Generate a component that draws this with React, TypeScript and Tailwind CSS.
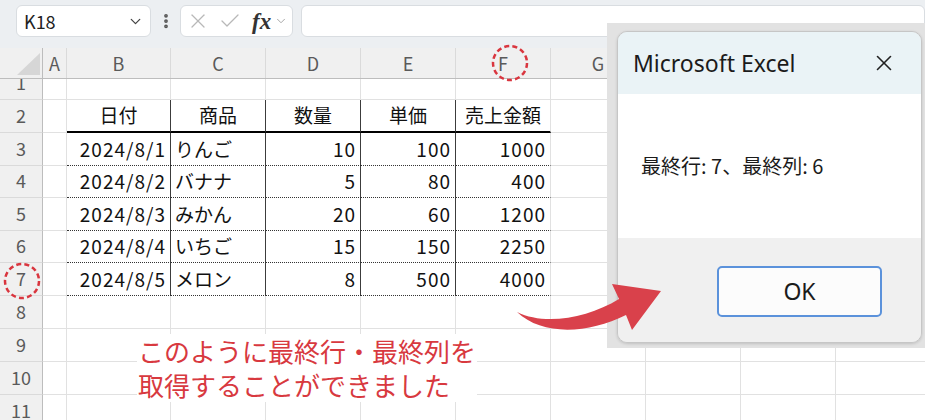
import { ChevronDown, EllipsisVertical, X, Check } from "lucide-react";

const cols = [
  { l: "A", w: "w-[24px]" },
  { l: "B", w: "w-[104px]" },
  { l: "C", w: "w-[95px]" },
  { l: "D", w: "w-[95px]" },
  { l: "E", w: "w-[95px]" },
  { l: "F", w: "w-[95px]" },
  { l: "G", w: "w-[95px]" },
  { l: "H", w: "w-[95px]" },
  { l: "I", w: "w-[95px]" },
  { l: "J", w: "w-[95px]" },
];

const rowHeights: Record<number, string> = {
  1: "h-[21px]",
  2: "h-[33px]",
  3: "h-[33px]",
  4: "h-[32px]",
  5: "h-[33px]",
  6: "h-[32px]",
  7: "h-[33px]",
  8: "h-[33px]",
  9: "h-[33px]",
  10: "h-[33px]",
  11: "h-[33px]",
};

const table: Record<number, string[]> = {
  2: ["日付", "商品", "数量", "単価", "売上金額"],
  3: ["2024/8/1", "りんご", "10", "100", "1000"],
  4: ["2024/8/2", "バナナ", "5", "80", "400"],
  5: ["2024/8/3", "みかん", "20", "60", "1200"],
  6: ["2024/8/4", "いちご", "15", "150", "2250"],
  7: ["2024/8/5", "メロン", "8", "500", "4000"],
};

const Cell = ({ ci, row }: { ci: number; row: number }) => {
  const col = cols[ci];
  const inTable = row >= 2 && row <= 7 && ci >= 1 && ci <= 5;
  if (!inTable) {
    return <div className={`${col.w} shrink-0 h-full border-r border-b border-[#e1e1e1]`} />;
  }
  const text = table[row][ci - 1];
  const right = ci < 5 ? "border-r border-r-[#3c3c3c]" : "border-r border-r-[#e1e1e1]";
  const bottom =
    row === 2
      ? "border-b-2 border-b-black"
      : "border-b border-b-[#333] [border-bottom-style:dotted]";
  let align = "justify-end pr-[4px] tracking-[1px]";
  if (row === 2) align = "justify-center";
  else if (ci === 2) align = "justify-start pl-[4px]";
  return (
    <div className={`${col.w} shrink-0 h-full flex items-center ${right} ${bottom} ${align} text-[19px] text-[#111]`}>
      {text}
    </div>
  );
};

export default function App() {
  const rows = [1, 2, 3, 4, 5, 6, 7, 8, 9, 10, 11];
  return (
    <div
      className="relative w-[925px] h-[420px] overflow-hidden bg-white"
      style={{ fontFamily: '"Noto Sans CJK JP", "Noto Sans", sans-serif' }}
    >
      {/* formula bar */}
      <div className="h-[48px] bg-[#eceff2] flex items-start pt-[5px] pl-[16px]">
        <div className="w-[135px] h-[32px] bg-white border border-[#d9dde1] rounded-[6px] flex items-center justify-between pl-[7px] pr-[6px]">
          <span className="text-[18px] text-[#222]">K18</span>
          <ChevronDown size={17} strokeWidth={1.8} className="text-[#444]" />
        </div>
        <div className="w-[29px] h-[32px] flex items-center justify-center">
          <EllipsisVertical size={18} strokeWidth={3} className="text-[#555]" />
        </div>
        <div className="w-[113px] h-[32px] bg-white border border-[#d9dde1] rounded-[6px] flex items-center pl-[5px]">
          <X size={24} strokeWidth={1.3} className="text-[#b8b8b8]" />
          <Check size={24} strokeWidth={1.3} className="ml-[8px] text-[#b8b8b8]" />
          <span
            className="ml-[10px] text-[23px] italic font-bold text-[#333] leading-none"
            style={{ fontFamily: '"Liberation Serif", serif' }}
          >
            fx
          </span>
          <ChevronDown size={14} strokeWidth={1.5} className="ml-[3px] text-[#9a9a9a]" />
        </div>
        <div className="ml-[8px] flex-1 h-[32px] bg-white border border-[#d9dde1] rounded-[6px]" />
      </div>

      {/* column headers */}
      <div className="flex h-[31px] bg-[#f0f0f0] border-b border-[#bdbdbd]">
        <div className="w-[43px] shrink-0 h-full border-r border-[#bdbdbd] relative">
          <svg className="absolute left-0 top-0" width="43" height="31">
            <polygon points="17,27 40,27 40,5" fill="#d6d6d6" />
          </svg>
        </div>
        {cols.map((c) => (
          <div
            key={c.l}
            className={`${c.w} shrink-0 h-full flex items-center justify-center border-r border-[#dadada] text-[18px] text-[#5a5a5a]`}
          >
            {c.l}
          </div>
        ))}
      </div>

      {/* rows */}
      {rows.map((r) => (
        <div key={r} className={`flex ${rowHeights[r]}`}>
          <div className="w-[43px] shrink-0 h-full bg-[#f0f0f0] border-r border-b border-r-[#bdbdbd] border-b-[#dadada] overflow-hidden flex items-end justify-center">
            <div className="h-[33px] shrink-0 flex items-center justify-center text-[18px] text-[#5a5a5a]">
              {r}
            </div>
          </div>
          {cols.map((c, ci) => (
            <Cell key={c.l} ci={ci} row={r} />
          ))}
        </div>
      ))}

      {/* annotation */}
      <div className="absolute left-[137px] top-[334px] bg-white px-[1px] text-[26px] leading-[34px] text-[#d8393f]">
        <div>このように最終行・最終列を</div>
        <div>取得することができました</div>
      </div>

      {/* message box screenshot */}
      <div className="absolute left-[607px] top-[23px] w-[318px] h-[325px] bg-[#e2e2e2] pl-[10px] pt-[8px]">
        <div className="w-[305px] h-[312px] rounded-[10px] overflow-hidden border border-[#c6c6c6] flex flex-col shadow-[0_1px_3px_rgba(0,0,0,0.15)]">
          <div className="h-[62px] bg-[#eaf3f6] flex items-center justify-between pl-[15px] pr-[24px]">
            <span className="text-[23px] text-[#1b1b1b]" style={{ fontFamily: '"Noto Sans", sans-serif' }}>
              Microsoft Excel
            </span>
            <X size={26} strokeWidth={1.5} className="text-[#222]" />
          </div>
          <div className="h-[144px] bg-white flex items-center pl-[23px] text-[20px] text-[#1b1b1b]">
            最終行: 7、最終列: 6
          </div>
          <div className="flex-1 bg-[#f0f0f0] pl-[99px] pt-[28px]">
            <div
              className="w-[165px] h-[51px] rounded-[5px] border-2 border-[#5b92db] bg-[#fcfcfc] flex items-center justify-center text-[23px] text-[#1b1b1b]"
              style={{ fontFamily: '"Noto Sans", sans-serif' }}
            >
              OK
            </div>
          </div>
        </div>
      </div>

      {/* arrow and circles */}
      <svg className="absolute left-0 top-0 pointer-events-none" width="925" height="420">
        <path
          d="M517,312 C545,326 588,318 619,299 L612,284 L661,291 L632,330 L626,315 C588,334 542,336 517,312 Z"
          fill="#d9414b"
        />
        <circle cx="510" cy="63" r="17" fill="none" stroke="#d9363f" strokeWidth="2.5" strokeDasharray="5 3.2" />
        <circle cx="22" cy="281" r="17" fill="none" stroke="#d9363f" strokeWidth="2.5" strokeDasharray="5 3.2" />
      </svg>
    </div>
  );
}
